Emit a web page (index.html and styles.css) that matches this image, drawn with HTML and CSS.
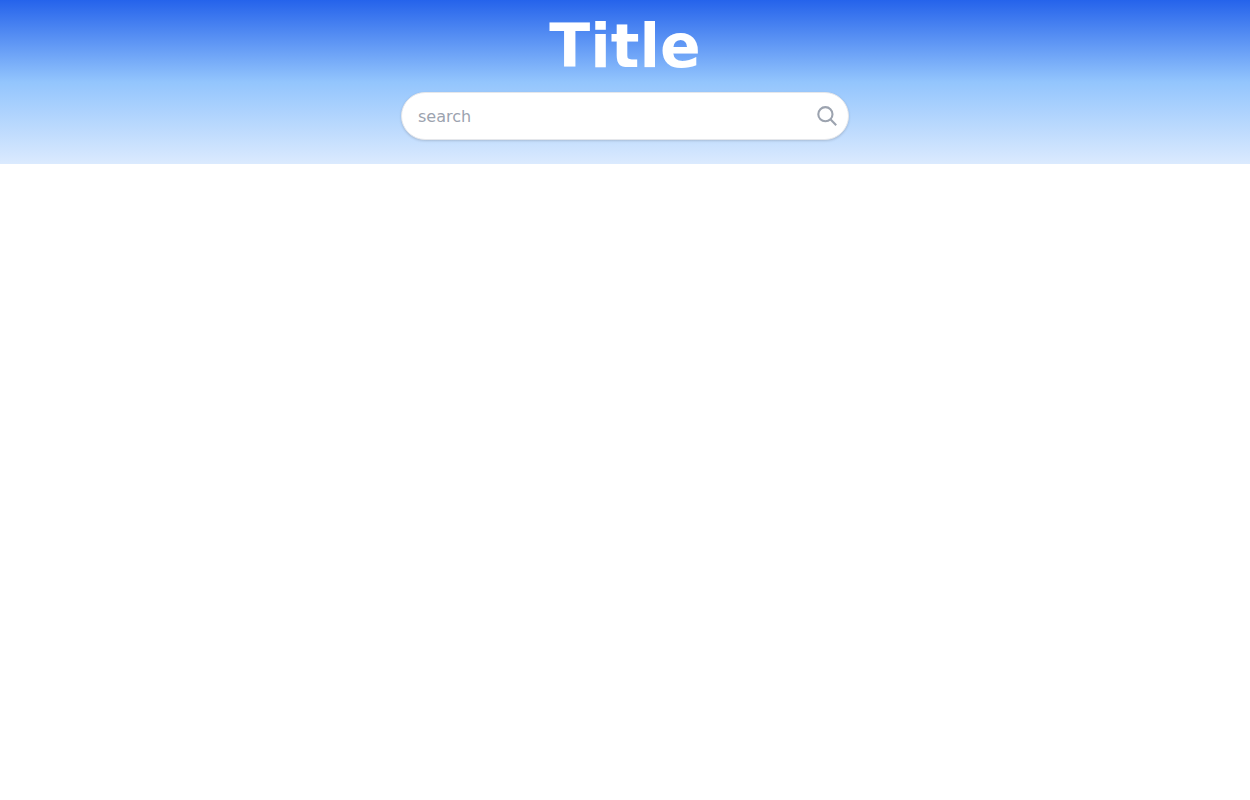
FILE: index.html
```html
<!DOCTYPE html>
<html lang="en">
  <head>
    <meta charset="UTF-8" />
    <meta name="viewport" content="width=device-width, initial-scale=1.0" />
    <title>Title</title>
    <link rel="stylesheet" href="styles.css">
  </head>
  <body>
    <header class="header">
      <h1 class="title">Title</h1>
      <form class="search" role="search">
        <input class="search-input" type="search" name="q" placeholder="search" aria-label="search" />
        <button class="search-button" type="submit" aria-label="Submit search">
          <svg class="search-icon" viewBox="0 0 24 24" fill="none" stroke="currentColor" stroke-width="2.1">
            <circle cx="10.4" cy="10.2" r="7.1" />
            <path d="M15.4 15.2l5.8 6" />
          </svg>
        </button>
      </form>
    </header>
  </body>
</html>
```

FILE: styles.css
```css
* {
  box-sizing: border-box;
}
body {
  margin: 0;
  font-family: "DejaVu Sans", sans-serif;
  background-color: #fff;
}
.header {
  display: flex;
  flex-direction: column;
  align-items: center;
  gap: 16px;
  padding: 16px 16px 24px;
  background: linear-gradient(to bottom, #2563eb, #93c5fd, #dbeafe);
}
.title {
  margin: 0;
  font-size: 60px;
  line-height: 60px;
  font-weight: bold;
  color: #fff;
}
.search {
  display: flex;
  align-items: center;
  width: 100%;
  max-width: 448px;
  padding: 0 9px 0 16px;
  border: 1px solid #e5e7eb;
  border-radius: 24px;
  background-color: #fff;
  box-shadow: 0 1px 3px rgba(0, 0, 0, 0.1), 0 1px 2px rgba(0, 0, 0, 0.06);
}
.search:focus-within {
  border-color: #2563eb;
}
.search-input {
  flex: 1;
  min-width: 0;
  height: 46px;
  padding: 0;
  border: none;
  outline: none;
  background: none;
  font-family: inherit;
  font-size: 16px;
  color: #111827;
  appearance: none;
}
.search-input::placeholder {
  color: #9ca3af;
}
.search-button {
  display: flex;
  padding: 0;
  border: none;
  background: none;
  color: #9ca3af;
  cursor: pointer;
}
.search-button:hover {
  color: #2563eb;
}
.search-icon {
  width: 24px;
  height: 24px;
}
```
